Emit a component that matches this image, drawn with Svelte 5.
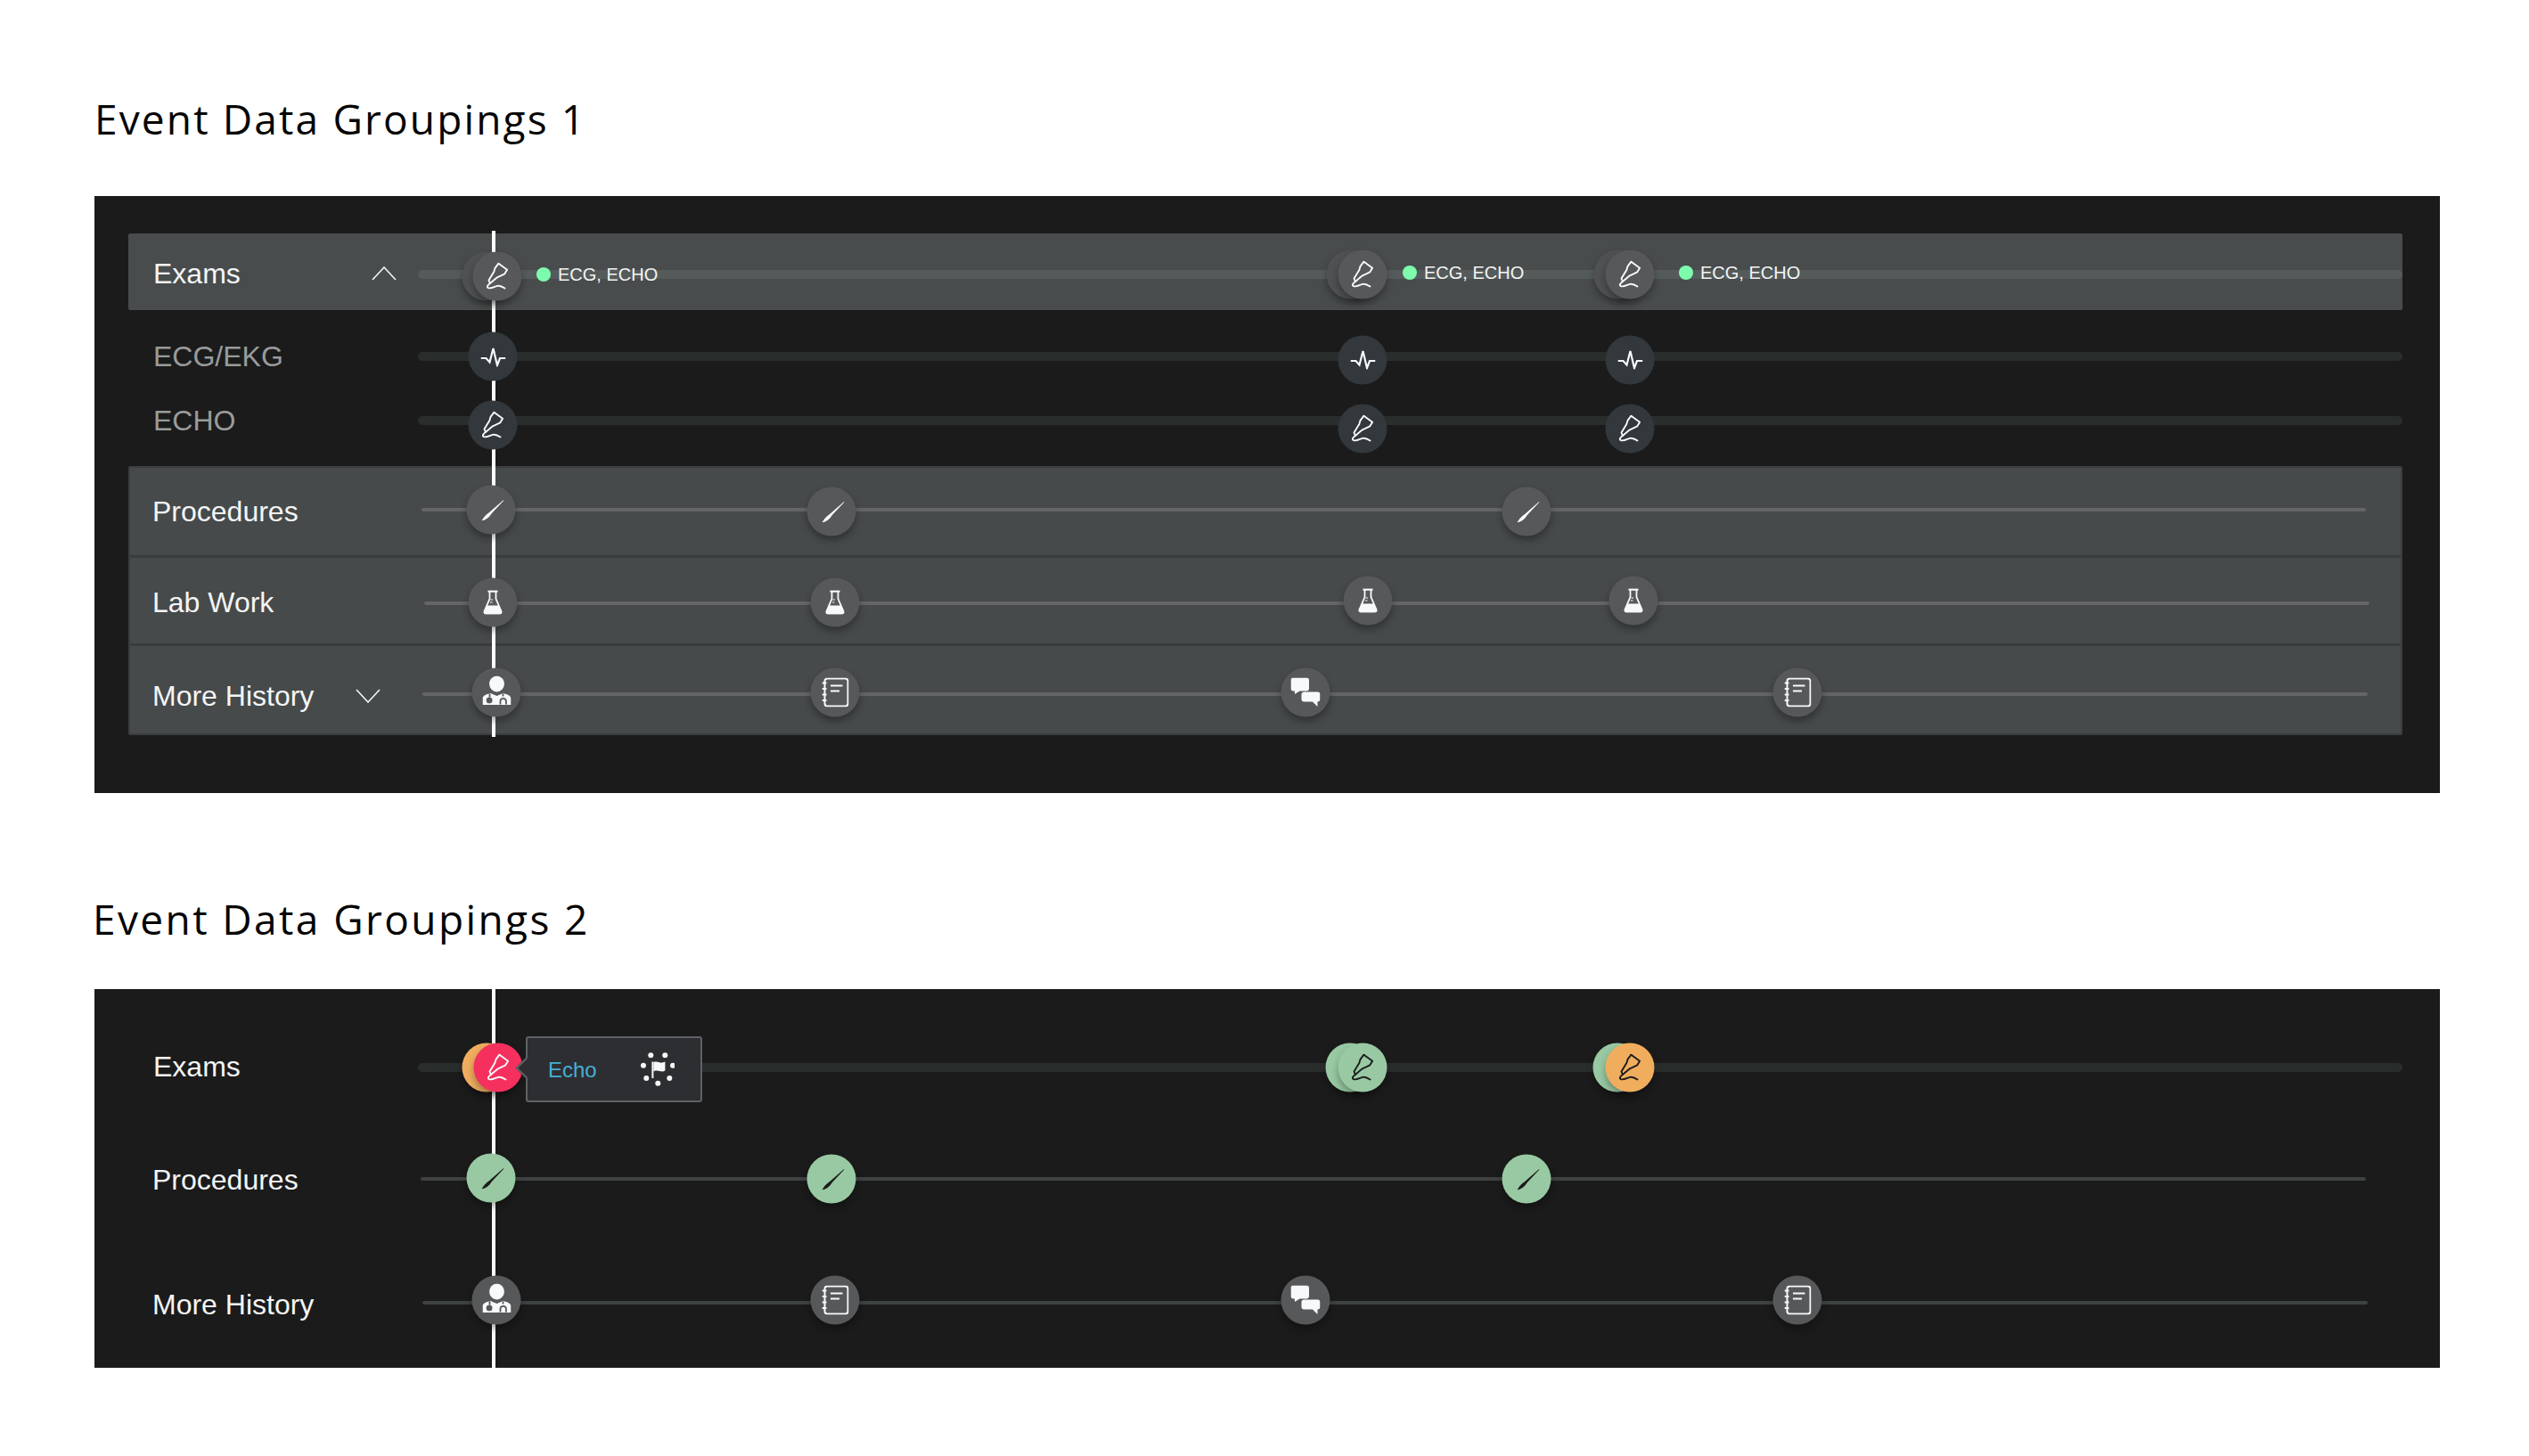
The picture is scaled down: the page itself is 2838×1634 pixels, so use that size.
<script>
  const probe = (cx, tone = 'gray', dy = 0) => ({ cx, tone, dy, icon: 'probe' });
  const back = (cx, tone = 'back', dy = 0) => ({ cx, tone, dy });
  const at = (icon, cx, dy, tone = 'gray') => ({ icon, cx, dy, tone });

  const examsTop = [
    back(546, 'back', 2), probe(558, 'gray', 2),
    back(1516), probe(1529),
    back(1816), probe(1829)
  ];
  const tags = [
    { x: 602, dy: 0 },
    { x: 1574, dy: -2 },
    { x: 1884, dy: -2 }
  ];

  const rowsDetail = [
    { label: 'ECG/EKG', x0: 469, marks: [at('pulse', 553, 0, 'slate'), at('pulse', 1529, 3.5, 'slate'), at('pulse', 1829, 3.5, 'slate')] },
    { label: 'ECHO', x0: 469, marks: [at('probe', 553, 5, 'slate'), at('probe', 1529, 9, 'slate'), at('probe', 1829, 9, 'slate')] }
  ];

  const groupRows = [
    { label: 'Procedures', cls: 'r-proc', x0: 473, x1: 2655, marks: [at('scalpel', 551, 0), at('scalpel', 933, 2), at('scalpel', 1713, 2)] },
    { label: 'Lab Work', cls: 'r-lab', x0: 476, x1: 2659, marks: [at('flask', 553, -1), at('flask', 937, -1), at('flask', 1535, -3), at('flask', 1833, -3)] },
    { label: 'More History', cls: 'r-more', x0: 474, x1: 2657, chevron: true, marks: [at('doctor', 557, -2), at('notebook', 937, -2), at('chat', 1465, -2), at('notebook', 2017, -2)] }
  ];

  const rows2 = [
    { label: 'Exams', cls: 'g-exams', lane: 'thick', lx: 172, x0: 469, x1: 2696, marks: [
      back(546, 'orange'), probe(559, 'pink'),
      back(1515, 'green'), { ...probe(1529, 'green'), dark: true },
      back(1814.5, 'green'), { ...probe(1829, 'orange'), dark: true }
    ] },
    { label: 'Procedures', cls: 'g-proc', lane: 'thin', lx: 171, x0: 472, x1: 2655, marks: [
      { ...at('scalpel', 551, -1, 'green'), dark: true }, { ...at('scalpel', 932.5, 0, 'green'), dark: true }, { ...at('scalpel', 1712.5, 0, 'green'), dark: true }
    ] },
    { label: 'More History', cls: 'g-more', lane: 'thin', lx: 171, x0: 474, x1: 2657, marks: [at('doctor', 557, -2.5), at('notebook', 937, -2.5), at('chat', 1465, -2.5), at('notebook', 2017, -2.5)] }
  ];

  const flagDots = [[13.3, 4.3], [29.3, 4.3], [38, 15.7], [34.3, 30], [21.3, 35.7], [8.3, 30], [5, 15.7]];
</script>

{#snippet icon(name)}
  {#if name === 'probe'}
    <svg width="25" height="31" viewBox="0 0 25 31" fill="none" stroke="currentColor" stroke-width="1.9" stroke-linejoin="round" stroke-linecap="round">
      <path d="M14 1.2 L23.6 8.2 L20.8 12.8 L12.4 16.8 L4.4 23.4 C1.6 25.4 .4 27.6 2.4 28.6 C5.4 29.8 9 27.4 12.2 26.4 C15.2 25.6 17.6 26.6 21 29" />
      <path d="M14 1.2 L10 6.4 L8.8 10.4 L3 20 L4.4 23.4" />
    </svg>
  {:else if name === 'pulse'}
    <svg width="28" height="22" viewBox="0 0 28 22" fill="none" stroke="currentColor" stroke-width="2.2" stroke-linejoin="miter">
      <path d="M0 12.5 H6 L10 17 L14 1.5 L18.5 20.5 L21.5 12.5 H28" />
    </svg>
  {:else if name === 'scalpel'}
    <svg class="i-scalpel" width="25" height="24" viewBox="0 0 25 24" fill="currentColor">
      <path d="M24.6 .4 L25 1 L11.4 15.4 C8.6 20 4.6 23 0 24 C2 21 3.6 18 8.6 14.6 Z" />
    </svg>
  {:else if name === 'flask'}
    <svg width="23" height="27" viewBox="0 0 23 27" fill="none" stroke="currentColor" stroke-width="1.8">
      <path d="M6 1 H17" stroke-width="2.4" />
      <path d="M8 1 V9.5 L2 23.5 Q1.4 26 4 26 H19 Q21.6 26 21 23.5 L15 9.5 V1" />
      <path d="M9 10.5 H11.6 M8.5 13.5 H11" stroke-width="1.2" />
      <path d="M4.6 17 H18.4 L21.6 25 Q21.6 27 19 27 H4 Q1.4 27 1.4 25 Z" fill="currentColor" stroke="none" />
    </svg>
  {:else if name === 'doctor'}
    <svg class="i-doctor" width="32" height="33" viewBox="0 0 32 33">
      <ellipse cx="16" cy="9" rx="8.4" ry="9" fill="currentColor" />
      <path d="M0 32.5 V25.5 C0 22.5 4 20.5 9 19.5 L16 22.5 L23 19.5 C28 20.5 32 22.5 32 25.5 V32.5 Z" fill="currentColor" />
      <path class="cut" d="M8 20 V24" />
      <circle class="cut-fill" cx="7.6" cy="27.4" r="3.4" />
      <path class="cut" d="M23 20 V23 M20 32 V28.6 A3.2 3.2 0 0 1 26.4 28.6 V32" />
    </svg>
  {:else if name === 'notebook'}
    <svg width="30" height="33" viewBox="0 0 30 33" fill="none" stroke="currentColor" stroke-width="2">
      <rect x="3" y="1" width="26" height="31" rx="3" />
      <path d="M0 6 H5 M0 12.5 H5 M0 19 H5 M0 25.5 H5" stroke-width="2.2" />
      <path d="M9.5 9 H23 M9.5 15 H19.5" stroke-width="2" />
    </svg>
  {:else if name === 'chat'}
    <svg width="33" height="33" viewBox="0 0 33 33" fill="currentColor">
      <path d="M3 0 H17.5 Q20.5 0 20.5 3 V12 Q20.5 15 17.5 15 H10 L4.4 18.4 V15 H3 Q0 15 0 12 V3 Q0 0 3 0 Z" />
      <path d="M15 16 H30 Q33 16 33 19 V24 Q33 27 30 27 V32.6 L24.4 27 H15 Q12 27 12 24 V19 Q12 16 15 16 Z" />
    </svg>
  {/if}
{/snippet}

{#snippet marks(list, x0)}
  {#each list as m}
    <span class="node {m.tone}" class:dark={m.dark} style="left:{m.cx - x0}px;top:calc(50% + {m.dy}px)">
      {#if m.icon}{@render icon(m.icon)}{/if}
    </span>
  {/each}
{/snippet}

{#snippet chevron(up)}
  <svg class="chev" width="28" height="16" viewBox="0 0 28 16" fill="none" stroke="currentColor" stroke-width="1.6">
    <path d={up ? 'M1 15 L14 1 L27 15' : 'M1 1 L14 15 L27 1'} />
  </svg>
{/snippet}

<main class="page">
  <h2 class="title t1">Event Data Groupings 1</h2>
  <section class="panel p1">
    <i class="playhead"></i>
    <div class="row band">
      <div class="label with-chev" style="width:297px">
        <span>Exams</span>{@render chevron(true)}
      </div>
      <div class="lane thick onband">
        {@render marks(examsTop, 469)}
        {#each tags as t}
          <span class="tag" style="left:{t.x - 469}px;top:calc(50% + {t.dy}px)"><b class="dot"></b>ECG, ECHO</span>
        {/each}
      </div>
    </div>
    {#each rowsDetail as r, i}
      <div class="row detail" class:first={i === 0}>
        <div class="label dim" style="width:297px">{r.label}</div>
        <div class="lane thick">
          {@render marks(r.marks, r.x0)}
        </div>
      </div>
    {/each}
    <div class="group">
      {#each groupRows as r}
        <div class="row grow {r.cls}">
          <div class="label with-chev" class:more={r.chevron} style="width:{r.x0 - 171}px">
            <span>{r.label}</span>{#if r.chevron}{@render chevron(false)}{/if}
          </div>
          <div class="lane thin light" style="width:{r.x1 - r.x0}px">
            {@render marks(r.marks, r.x0)}
          </div>
        </div>
      {/each}
    </div>
  </section>

  <h2 class="title t2">Event Data Groupings 2</h2>
  <section class="panel p2">
    <i class="playhead full"></i>
    {#each rows2 as r, i}
      <div class="row flat {r.cls}" style="padding-left:{r.lx - 106}px">
        <div class="label" style="width:{r.x0 - r.lx}px">{r.label}</div>
        <div class="lane {r.lane}" style="width:{r.x1 - r.x0}px">
          {@render marks(r.marks, r.x0)}
          {#if i === 0}
            <div class="tip">
              <span class="tip-text">Echo</span>
              <svg width="40" height="40" viewBox="0 0 40 40" fill="#f7f8fa">
                {#each flagDots as d}<circle cx={d[0]} cy={d[1]} r="3" />{/each}
                <path d="M14.4 11.5 H16.4 V30 H14.4 Z" />
                <path d="M16.4 12 C20 10.4 23 13 26 12.6 C27.6 12.4 28.6 12 29.4 11.6 V21.6 C26 23.4 23 21.6 20 21.6 C18.4 21.6 17.2 22 16.4 22.4 Z" />
              </svg>
            </div>
          {/if}
        </div>
      </div>
    {/each}
  </section>
</main>

<style>
  :global(body) {
    margin: 0;
    background: #fff;
  }
  .page {
    width: 2838px;
    height: 1634px;
    padding-top: 103px;
    box-sizing: border-box;
    overflow: hidden;
    font-family: "Liberation Sans", Arial, sans-serif;
  }
  .title {
    margin: 0;
    height: 60px;
    line-height: 60px;
    font-family: "Open Sans", sans-serif;
    font-size: 46px;
    font-weight: 500;
    color: #050505;
    letter-spacing: 2.15px;
  }
  .t1 { margin: 0 0 57px 106px; }
  .t2 { margin: 111px 0 49px 104px; letter-spacing: 2.4px; }

  .panel {
    position: relative;
    width: 2632px;
    margin-left: 106px;
    background: #1b1b1b;
    box-sizing: border-box;
  }
  .p1 { height: 670px; padding: 42px 42px 0 38px; }
  .p2 { height: 425px; padding: 50px 42px 0 0; }

  .playhead {
    position: absolute;
    z-index: 1;
    left: 446px;
    top: 39px;
    width: 4px;
    height: 568px;
    background: #fff;
  }
  .playhead.full { top: 0; height: 100%; }

  .row {
    display: flex;
    align-items: center;
    box-sizing: border-box;
  }
  .label {
    flex: none;
    box-sizing: border-box;
    font-size: 32px;
    color: #f4f5f5;
    white-space: nowrap;
  }
  .label.dim { color: #999b9b; }
  .with-chev {
    display: flex;
    align-items: center;
    justify-content: space-between;
    padding-right: 24px;
  }
  .with-chev.more { padding-right: 47px; }
  .chev { color: #f4f5f5; }

  .band {
    height: 86px;
    padding-left: 28px;
    background: #484c4d;
    border-radius: 2px;
  }
  .band .label { margin-top: 4px; }
  .band .lane { margin-top: 6px; }

  .detail { height: 72px; padding-left: 28px; }
  .detail.first { margin-top: 16px; }

  .group {
    margin-top: 15px;
    background: #464a4b;
    border: 2px solid #3a3e3e;
    border-radius: 2px;
  }
  .grow {
    padding-left: 25px;
    border-top: 3px solid #393d3d;
  }
  .grow:first-child { border-top: 0; }
  .r-proc { height: 98px; }
  .r-lab { height: 99px; }
  .r-more { height: 101px; }
  .r-proc .lane { margin-top: -4px; }
  .r-lab .label { margin-top: 4px; }
  .r-lab .lane { margin-top: 6px; }
  .r-more .label { margin-top: 14px; }
  .r-more .lane { margin-top: 10px; }

  .flat { height: 76px; }
  .g-proc { margin-top: 50px; }
  .g-more { margin-top: 62px; }
  .g-exams .label { margin-top: -2px; }
  .g-proc .lane { margin-top: -2px; }
  .g-more .lane { margin-top: -1px; }
  .g-more .label { margin-top: 4px; }

  .lane {
    position: relative;
    flex: none;
    border-radius: 5px;
  }
  .lane.thick {
    width: 2227px;
    height: 10px;
    background: #292d2c;
  }
  .lane.thick.onband { background: #555b5b; }
  .lane.thin {
    height: 4px;
    background: #3f4242;
  }
  .lane.thin.light { background: #636566; }

  .node {
    position: absolute;
    z-index: 2;
    width: 55px;
    height: 55px;
    border-radius: 50%;
    display: flex;
    align-items: center;
    justify-content: center;
    transform: translate(-50%, -50%);
    color: #f8f9fb;
    --cut: #565859;
    box-shadow: 0 5px 9px rgba(0, 0, 0, 0.32);
  }
  .node.gray { background: #565859; }
  .node.back { background: #4f5152; }
  .node.slate { background: #32383c; box-shadow: none; }
  .node.green { background: #98c9a3; }
  .node.orange { background: #f0ad5e; }
  .node.pink { background: #f5305f; }
  .node.dark { color: #1c1c1c; }
  .i-scalpel { margin-left: 4px; }
  .i-doctor { margin-top: -5px; }
  .i-doctor .cut { fill: none; stroke: var(--cut); stroke-width: 1.8; }
  .i-doctor .cut-fill { fill: var(--cut); }

  .tag {
    position: absolute;
    z-index: 2;
    display: flex;
    align-items: center;
    gap: 8px;
    transform: translateY(-50%);
    font-size: 20px;
    color: #f4f5f5;
    white-space: nowrap;
    line-height: 20px;
  }
  .dot {
    width: 16px;
    height: 16px;
    border-radius: 50%;
    background: #7dfcae;
  }

  .tip {
    position: absolute;
    z-index: 3;
    left: 121px;
    top: 50%;
    width: 198px;
    height: 74px;
    margin-top: -35px;
    box-sizing: border-box;
    display: flex;
    align-items: center;
    justify-content: space-between;
    padding: 0 29px 0 23px;
    background: #2d2e31;
    border: 2px solid #5f6265;
    border-radius: 3px;
  }
  .tip::before {
    content: "";
    position: absolute;
    left: -10px;
    top: 50%;
    width: 15px;
    height: 15px;
    margin-top: -10px;
    background: #2d2e31;
    border-left: 2px solid #5f6265;
    border-bottom: 2px solid #5f6265;
    transform: rotate(45deg);
  }
  .tip-text {
    margin-top: 2px;
    font-size: 24px;
    color: #45b0d6;
  }
</style>
